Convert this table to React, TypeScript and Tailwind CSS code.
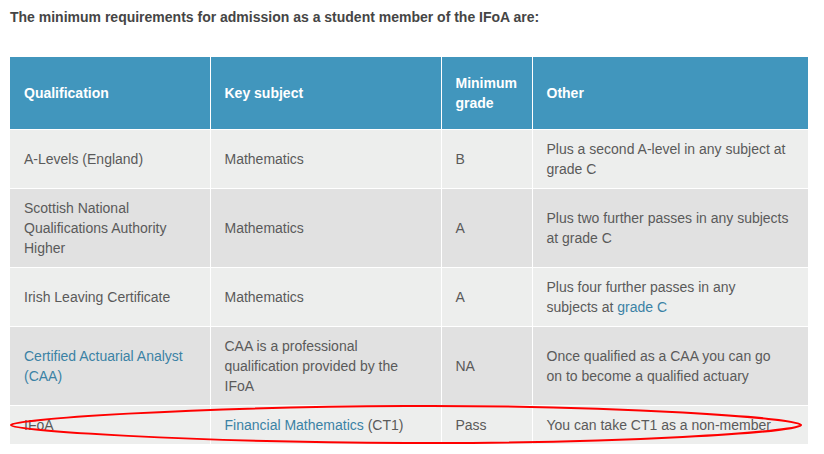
import React from 'react';

type Row = {
  qualification: React.ReactNode;
  subject: React.ReactNode;
  grade: string;
  other: React.ReactNode;
};

const Link = ({ children }: { children: React.ReactNode }) => (
  <a className="text-[#3b82a5] no-underline">{children}</a>
);

const rows: Row[] = [
  {
    qualification: 'A-Levels (England)',
    subject: 'Mathematics',
    grade: 'B',
    other: 'Plus a second A-level in any subject at grade C',
  },
  {
    qualification: 'Scottish National Qualifications Authority Higher',
    subject: 'Mathematics',
    grade: 'A',
    other: 'Plus two further passes in any subjects at grade C',
  },
  {
    qualification: 'Irish Leaving Certificate',
    subject: 'Mathematics',
    grade: 'A',
    other: (
      <>
        Plus four further passes in any
        <br />
        subjects at <Link>grade C</Link>
      </>
    ),
  },
  {
    qualification: <Link>Certified Actuarial Analyst (CAA)</Link>,
    subject: 'CAA is a professional qualification provided by the IFoA',
    grade: 'NA',
    other: (
      <>
        Once qualified as a CAA you can go
        <br />
        on to become a qualified actuary
      </>
    ),
  },
  {
    qualification: 'IFoA',
    subject: (
      <>
        <Link>Financial Mathematics</Link> (CT1)
      </>
    ),
    grade: 'Pass',
    other: 'You can take CT1 as a non-member',
  },
];

const App = () => {
  return (
    <div className="relative w-[824px] h-[454px] bg-white font-['Liberation_Sans',Arial,sans-serif] text-[14px] leading-5">
      <p className="pl-[10px] pt-[7px] font-bold text-[#454545]">
        The minimum requirements for admission as a student member of the IFoA are:
      </p>

      <table className="ml-[10px] mt-[30px] w-[798px] table-fixed border-collapse">
        <colgroup>
          <col className="w-[200px]" />
          <col className="w-[231px]" />
          <col className="w-[91px]" />
          <col className="w-[276px]" />
        </colgroup>
        <thead>
          <tr className="bg-[#4196bd] text-white font-bold">
            <th className="border-r border-white px-[14px] py-4 text-left align-middle">Qualification</th>
            <th className="border-r border-white px-[14px] py-4 text-left align-middle">Key subject</th>
            <th className="border-r border-white px-[14px] py-4 text-left align-middle">Minimum grade</th>
            <th className="px-[14px] py-4 text-left align-middle">Other</th>
          </tr>
        </thead>
        <tbody className="text-[#5a5a5a]">
          {rows.map((row, i) => (
            <tr
              key={i}
              className={`border-t border-white ${i % 2 === 0 ? 'bg-[#edeeed]' : 'bg-[#e1e1e1]'}`}
            >
              <td className="border-r border-white px-[14px] py-[9px] align-middle">{row.qualification}</td>
              <td className="border-r border-white px-[14px] py-[9px] align-middle">{row.subject}</td>
              <td className="border-r border-white px-[14px] py-[9px] align-middle">{row.grade}</td>
              <td className="px-[14px] py-[9px] align-middle">{row.other}</td>
            </tr>
          ))}
        </tbody>
      </table>

      {/* red annotation round the last row */}
      <svg className="absolute left-0 top-0 pointer-events-none" width="824" height="454">
        <path
          d="M 11 425 C 13 419, 190 407, 406 406 C 620 405, 798 418, 801 425 C 798 432, 620 444, 406 443 C 190 442, 13 431, 11 425 Z"
          fill="none"
          stroke="#ff0000"
          strokeWidth="2"
        />
      </svg>
    </div>
  );
};

export default App;
